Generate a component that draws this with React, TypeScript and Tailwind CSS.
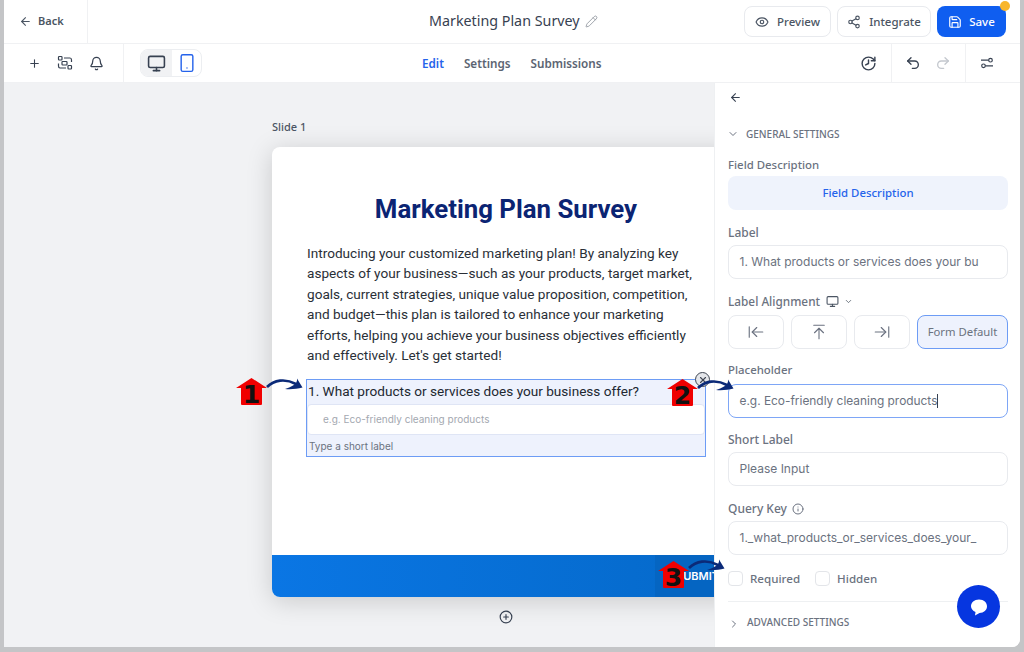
import React from "react";
import { ArrowLeft, ArrowLeftToLine, ArrowRightToLine, ArrowUpToLine, ChevronDown, ChevronRight, Eye, Info, Monitor, Pencil, Plus, Bell, Save, Share2, Smartphone, Undo2, Redo2, CirclePlus, X, History } from "lucide-react";

function Badge({ n }: { n: string }) {
  return (
    <div className="relative h-[27px] w-[31px]">
      <svg width="31" height="27" viewBox="0 0 31 27" className="absolute left-0 top-0">
        <path d="M15.5 0 L31 10 L26 10 L26 26 Q26 27 25 27 L6 27 Q5 27 5 26 L5 10 L0 10 Z" fill="#f00000" />
      </svg>
      <span className="absolute inset-0 flex items-center justify-center pt-[6px] text-[25px] font-bold leading-none text-[#111] [font-family:'DejaVu_Sans',sans-serif]">{n}</span>
    </div>
  );
}

function Curve() {
  return (
    <svg width="38" height="16" viewBox="0 0 38 16" fill="none">
      <path d="M1 10 C8 3 19 1 30 7" stroke="#0b2a78" strokeWidth="2.6" />
      <path d="M36.5 10.5 L31 1.5 C31.5 4 30 7 27 8.5 C24.5 10 22 11 19 12 C25 12.5 31 12 36.5 10.5 Z" fill="#0b2a78" />
    </svg>
  );
}

function Field({ label, value, className = "" }: { label: React.ReactNode; value: string; className?: string }) {
  return (
    <div className={`flex flex-col ${className}`}>
      <div className="mb-[4px] font-['Noto_Sans',sans-serif] text-[12px] font-medium leading-4 text-[#6b7280]">{label}</div>
      <div className="flex h-[34px] items-center overflow-hidden whitespace-nowrap rounded-lg border border-[#e8eaee] px-[10.5px] font-['Inter',sans-serif] text-[12px] text-[#6b7280]">{value}</div>
    </div>
  );
}

export default function App() {
  return (
    <div className="relative h-[652px] w-[1024px] overflow-hidden bg-[#c4c5c7] pb-[5px] pl-[4px] pr-[4px] font-['Noto_Sans',sans-serif]">
      <div className="flex h-[647px] w-[1016px] flex-col overflow-hidden rounded-br-lg bg-white">
        {/* Top bar */}
        <header className="relative flex h-[44px] shrink-0 items-center justify-between border-b border-[#f0f1f3] pr-[14px]">
          <div className="flex h-full w-[84px] items-center gap-[6px] border-r border-[#f0f1f3] pb-[1px] pl-[15px] text-[11px] font-semibold text-[#4b5563]">
            <ArrowLeft size={13} strokeWidth={2} />
            <span>Back</span>
          </div>
          <div className="absolute left-[425px] top-[11px] flex items-center gap-[5px] text-[14.3px] leading-5 text-[#374151]">
            <span>Marketing Plan Survey</span>
            <Pencil size={13} className="text-[#8a9099]" strokeWidth={1.5} />
          </div>
          <div className="flex items-center gap-[6px]">
            <div className="flex h-[31px] w-[87px] items-center justify-center gap-[8px] rounded-lg border border-[#e8eaee] text-[11.5px] font-medium text-[#4b5563]">
              <Eye size={14} />
              <span>Preview</span>
            </div>
            <div className="flex h-[31px] w-[94px] items-center justify-center gap-[8px] rounded-lg border border-[#e8eaee] text-[11.5px] font-medium text-[#4b5563]">
              <Share2 size={14} />
              <span>Integrate</span>
            </div>
            <div className="relative flex h-[31px] w-[69px] items-center justify-center gap-[7px] rounded-lg bg-[#0f5ef0] text-[11.5px] font-medium text-white">
              <Save size={14} />
              <span>Save</span>
              <span className="absolute right-[-4px] top-[-5px] h-[10px] w-[10px] rounded-full bg-[#f8b62d]" />
            </div>
          </div>
        </header>

        {/* Second bar */}
        <div className="relative flex h-[39px] shrink-0 items-center border-b border-[#f0f1f3]">
          <div className="flex h-full w-[120px] items-center gap-[16px] border-r border-[#f0f1f3] pl-[24px] text-[#374151]">
            <Plus size={13} />
            <svg width="16" height="16" viewBox="0 0 16 16" fill="none" stroke="currentColor" strokeWidth="1.2">
              <rect x="1.5" y="1.5" width="3.5" height="3.5" rx="0.7" />
              <rect x="11" y="10.5" width="3.5" height="3.5" rx="0.7" />
              <rect x="5" y="6.5" width="5" height="3.5" rx="0.7" />
              <path d="M7 3 H13 C14 3 14.5 4 14.5 5 V7 M9 13 H3 C2 13 1.5 12 1.5 11 V8.5" />
            </svg>
            <Bell size={15} />
          </div>
          <div className="ml-[16px] flex h-[28px] w-[62px] overflow-hidden rounded-lg border border-[#eceef1]">
            <div className="flex w-[31px] items-center justify-center bg-[#f1f2f4] text-[#374151]"><Monitor size={19} /></div>
            <div className="flex flex-1 items-center justify-center text-[#2563eb]"><Smartphone size={20} strokeWidth={1.7} /></div>
          </div>
          <div className="absolute left-[418px] top-[11px] flex gap-[20px] text-[11.7px] font-semibold leading-4 text-[#5b6472]">
            <span className="text-[#2563eb]">Edit</span>
            <span>Settings</span>
            <span>Submissions</span>
          </div>
          <div className="ml-auto flex h-full items-center">
            <div className="flex w-[38px] items-center pl-[7px] text-[#374151]"><History size={17} className="-scale-x-100" /></div>
            <div className="flex h-full w-[75px] items-center gap-[14px] border-x border-[#f0f1f3] pl-[13px]">
              <Undo2 size={16} className="text-[#374151]" />
              <Redo2 size={16} className="text-[#c4c8ce]" />
            </div>
            <div className="flex w-[54px] items-center pl-[14px] text-[#374151]">
              <svg width="14" height="14" viewBox="0 0 14 14" fill="none" stroke="currentColor" strokeWidth="1.2">
                <circle cx="10.5" cy="4.2" r="1.8" />
                <circle cx="3.5" cy="9.8" r="1.8" />
                <path d="M1 4.2 H8.7 M5.3 9.8 H13" />
              </svg>
            </div>
          </div>
        </div>

        {/* Body */}
        <div className="flex min-h-0 flex-1">
          {/* Canvas */}
          <main className="relative min-w-0 flex-1 overflow-hidden bg-[#f1f2f4] pl-[268px] pt-[36px]">
            <div className="mb-[12px] text-[11px] font-medium leading-4 text-[#4b5563]">Slide 1</div>
            <div className="flex h-[450px] w-[468px] flex-col overflow-hidden rounded-lg bg-white shadow-[0_4px_26px_rgba(0,0,0,0.17)]">
              <div className="flex-1 px-[35px] pt-[45px]">
                <h1 className="text-center font-['Roboto',sans-serif] text-[25.8px] font-bold leading-[34px] text-[#0b2473]">Marketing Plan Survey</h1>
                <p className="mt-[17px] w-[392px] font-['Roboto',sans-serif] text-[13.6px] leading-[20.4px] text-[#2a2f37]">
                  Introducing your customized marketing plan! By analyzing key aspects of your business—such as your products, target market, goals, current strategies, unique value proposition, competition, and budget—this plan is tailored to enhance your marketing efforts, helping you achieve your business objectives efficiently and effectively. Let's get started!
                </p>
                <div className="relative ml-[-1px] mt-[13.6px] h-[78px] w-[400px] border border-[#6d9cf5] bg-[#eef2fd]">
                  <div className="pl-[1px] pt-[2px] font-['Roboto',sans-serif] text-[13.6px] leading-[19px] text-[#222831]">1. What products or services does your business offer?</div>
                  <div className="mt-[3px] flex h-[31px] items-center rounded-[4px] border border-[#dfe5f5] bg-white pl-[15px] font-['Inter',sans-serif] text-[10px] text-[#a3a8b0]">e.g. Eco-friendly cleaning products</div>
                  <div className="pl-[2px] pt-[5px] font-['Inter',sans-serif] text-[10px] leading-[13px] text-[#6b7280]">Type a short label</div>
                  <div className="absolute right-[-5px] top-[-8px] flex h-[15px] w-[15px] items-center justify-center rounded-full border border-[#3f4652] bg-[#e4e6ea] text-[#3f4652]"><X size={10} strokeWidth={2.6} /></div>
                </div>
              </div>
              <div className="relative flex h-[42px] shrink-0 justify-end bg-gradient-to-r from-[#0a76e4] to-[#0569c9]">
                <div className="flex w-[85px] items-center bg-[#0565c2] pl-[21px] font-['Inter',sans-serif] text-[11px] font-semibold text-white">SUBMIT</div>
              </div>
            </div>
            <div className="mt-[13px] flex w-[468px] justify-center text-[#374151]"><CirclePlus size={14} /></div>
          </main>

          {/* Panel */}
          <aside className="relative flex w-[306px] shrink-0 flex-col border-l border-[#eef0f2] bg-white pl-[13px] pr-[12px]">
            <ArrowLeft size={13} className="ml-[1px] mt-[8px] text-[#374151]" />
            <div className="mt-[22px] flex items-center gap-[7px] text-[10px] font-medium leading-4 text-[#6b7280]">
              <ChevronDown size={12} className="ml-[-1px]" />
              <span>GENERAL SETTINGS</span>
            </div>
            <div className="mt-[15px] text-[11.4px] font-medium leading-4 text-[#6b7280]">Field Description</div>
            <div className="mt-[3px] flex h-[34px] items-center justify-center rounded-lg bg-[#eff3fc] text-[11.4px] font-medium text-[#2563eb]">Field Description</div>
            <Field label="Label" value="1. What products or services does your bu" className="mt-[14.5px]" />
            <div className="mt-[14.5px] flex items-center gap-[6px] text-[11.8px] font-medium leading-4 text-[#6b7280]">
              <span>Label Alignment</span>
              <Monitor size={13} className="text-[#4b5563]" />
              <ChevronDown size={9} className="ml-[-1px] text-[#4b5563]" />
            </div>
            <div className="mt-[6px] flex justify-between">
              <div className="flex h-[34px] w-[56px] items-center justify-center rounded-lg border border-[#e8eaee] text-[#6b7280]">
                <ArrowLeftToLine size={18} strokeWidth={1.5} />
              </div>
              <div className="flex h-[34px] w-[56px] items-center justify-center rounded-lg border border-[#e8eaee] text-[#6b7280]">
                <ArrowUpToLine size={18} strokeWidth={1.5} />
              </div>
              <div className="flex h-[34px] w-[56px] items-center justify-center rounded-lg border border-[#e8eaee] text-[#6b7280]">
                <ArrowRightToLine size={18} strokeWidth={1.5} />
              </div>
              <div className="flex h-[34px] w-[91px] items-center justify-center rounded-lg border border-[#6d9cf5] bg-[#eef2fd] text-[11.3px] text-[#6b7280]">Form Default</div>
            </div>
            <div className="mb-[6px] mt-[13px] text-[11.4px] font-medium leading-4 text-[#6b7280]">Placeholder</div>
            <div className="flex h-[34px] items-center rounded-lg border border-[#7ea6f6] px-[10.5px] font-['Inter',sans-serif] text-[11.9px] text-[#6b7280]">
              <span>e.g. Eco-friendly cleaning products</span>
              <span className="h-[14px] w-px bg-[#374151]" />
            </div>
            <Field label="Short Label" value="Please Input" className="mt-[14px]" />
            <Field label={<span className="flex items-center gap-[5px]">Query Key <Info size={12} /></span>} value="1._what_products_or_services_does_your_" className="mt-[15px]" />
            <div className="mt-[15px] flex items-center text-[11.6px] font-medium text-[#6b7280]">
              <span className="h-[15px] w-[15px] rounded-[4px] border border-[#e3e5e9]" />
              <span className="ml-[7px]">Required</span>
              <span className="ml-[15px] h-[15px] w-[15px] rounded-[4px] border border-[#e3e5e9]" />
              <span className="ml-[7px]">Hidden</span>
            </div>
            <div className="mt-[14px] border-t border-[#eef0f2] pt-[12px]">
              <div className="flex items-center gap-[7px] text-[10px] font-medium leading-4 text-[#6b7280]">
                <ChevronRight size={12} className="mt-[4px]" />
                <span>ADVANCED SETTINGS</span>
              </div>
            </div>
            <div className="absolute left-[242px] top-[502px] flex h-[43px] w-[43px] items-center justify-center rounded-full bg-[#0636e0]">
              <svg width="20" height="20" viewBox="0 0 20 20"><path d="M10 2.5 C15 2.5 18 5.5 18 9.3 C18 13.2 14.8 16 10.5 16 L6 18.5 L6.5 15 C3.8 13.8 2 11.8 2 9.3 C2 5.5 5.2 2.5 10 2.5 Z" fill="#fff" /></svg>
            </div>
          </aside>
        </div>
      </div>

      {/* Annotations laid over the screenshot */}
      <div className="absolute left-[236px] top-[378px]"><Badge n="1" /></div>
      <div className="absolute left-[266px] top-[377px]"><Curve /></div>
      <div className="absolute left-[667px] top-[379px]"><Badge n="2" /></div>
      <div className="absolute left-[697px] top-[378px]"><Curve /></div>
      <div className="absolute left-[658px] top-[561px]"><Badge n="3" /></div>
      <div className="absolute left-[688px] top-[558px]"><Curve /></div>
    </div>
  );
}
